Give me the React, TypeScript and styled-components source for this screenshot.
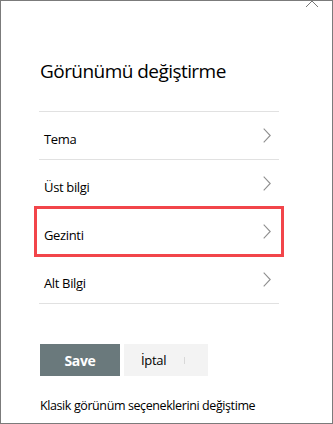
import React from "react";
import styled, { createGlobalStyle } from "styled-components";

const Global = createGlobalStyle`
  html, body { margin: 0; padding: 0; background: #ffffff; }
  * { box-sizing: border-box; }
`;

const Panel = styled.div`
  position: relative;
  width: 333px;
  height: 424px;
  border: 1px solid #7b7b7b;
  background: #ffffff;
  overflow: hidden;
  padding: 0 53px 0 38px;
  font-family: "Open Sans", "Noto Sans", sans-serif;
  color: #000000;
`;

const CloseIcon = styled.svg`
  position: absolute;
  top: -7px;
  right: 13px;
  width: 14px;
  height: 14px;
`;

const Title = styled.h1`
  margin: 0;
  padding: 57px 0 0 1px;
  height: 110px;
  font-size: 19px;
  font-weight: 400;
  line-height: 26px;
  letter-spacing: -0.55px;
`;

const List = styled.div`
  display: flex;
  flex-direction: column;
  border-top: 1px solid #e1e1e1;
`;

const Row = styled.div`
  position: relative;
  height: 48px;
  display: flex;
  align-items: center;
  justify-content: space-between;
  border-bottom: 1px solid #e1e1e1;
  padding: 0 8px 0 5px;
`;

const Label = styled.span`
  font-size: 13px;
  line-height: 18px;
  padding-top: 6px;
  letter-spacing: -0.35px;
`;

const Highlight = styled.div`
  position: absolute;
  left: -5px;
  right: -5px;
  top: -2px;
  bottom: -2px;
  border: 3px solid #f2454a;
  pointer-events: none;
`;

const Chevron = styled.svg`
  width: 8px;
  height: 15px;
  flex: none;
`;

const Actions = styled.div`
  display: flex;
  gap: 4px;
  margin-top: 40px;
  margin-left: 1px;
`;

const SaveButton = styled.button`
  width: 80px;
  height: 32px;
  border: none;
  background: #6a797c;
  color: #ffffff;
  font-family: "Open Sans", "Noto Sans", sans-serif;
  font-weight: 700;
  font-size: 14px;
  letter-spacing: -0.3px;
  padding: 0;
`;

const CancelButton = styled.button`
  width: 84px;
  height: 32px;
  border: none;
  background: #f3f3f3;
  color: #000000;
  font-family: "Open Sans", "Noto Sans", sans-serif;
  font-size: 13px;
  letter-spacing: -0.3px;
  padding: 0 0 0 17px;
  display: flex;
  align-items: center;
  gap: 18px;
`;

const Bar = styled.span`
  width: 1px;
  height: 7px;
  background: #d8d8d8;
`;

const Footer = styled.div`
  margin-top: 21px;
  margin-left: 1px;
  font-size: 12.5px;
  line-height: 18px;
  letter-spacing: -0.4px;
  white-space: nowrap;
`;

const ChevronIcon = () => (
  <Chevron viewBox="0 0 8 15">
    <path d="M0.7 0.7 L7.2 7.5 L0.7 14.3" fill="none" stroke="#8f8f8f" strokeWidth="1.1" />
  </Chevron>
);

const items = [
  { label: "Tema" },
  { label: "Üst bilgi" },
  { label: "Gezinti", highlight: true },
  { label: "Alt Bilgi" },
];

export default function App() {
  return (
    <>
      <Global />
      <Panel>
        <CloseIcon viewBox="0 0 14 14">
          <path d="M1 1 L13 13 M13 1 L1 13" stroke="#777" strokeWidth="1" fill="none" />
        </CloseIcon>
        <Title>Görünümü değiştirme</Title>
        <List>
          {items.map((it) => (
            <Row key={it.label}>
              <Label>{it.label}</Label>
              <ChevronIcon />
              {it.highlight && <Highlight />}
            </Row>
          ))}
        </List>
        <Actions>
          <SaveButton>Save</SaveButton>
          <CancelButton>
            İptal
            <Bar />
          </CancelButton>
        </Actions>
        <Footer>Klasik görünüm seçeneklerini değiştime</Footer>
      </Panel>
    </>
  );
}
